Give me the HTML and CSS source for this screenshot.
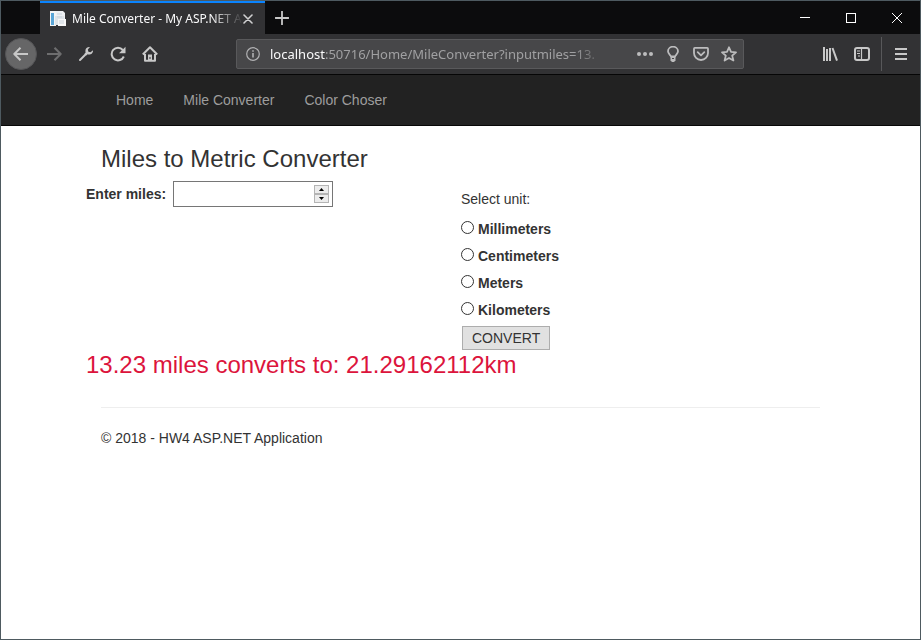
FILE: index.html
```html
<!DOCTYPE html>
<html lang="en">
<head>
<meta charset="utf-8">
<meta name="viewport" content="width=device-width, initial-scale=1">
<title>Mile Converter - My ASP.NET Application</title>
<link rel="stylesheet" href="styles.css">
</head>
<body>
<div class="window">
  <div class="titlebar">
    <div class="tab">
      <svg class="favicon" width="18" height="18" viewBox="0 0 18 18" aria-hidden="true">
        <rect x="1" y="1" width="6" height="15" fill="#f4f4f4"/>
        <rect x="2" y="3" width="3" height="12" fill="#5aa5d6"/>
        <path d="M7 1h7l2 2v8H7z" fill="#eef0f2"/>
        <path d="M6 6h9v9H6z" fill="#dfe4e8"/>
        <path d="M9 9h8v7H9z" fill="#f7f7f7"/>
        <path d="M8 4h5M8 7h5M10 11h5M10 13h5" stroke="#c9d3db" stroke-width="1"/>
      </svg>
      <span class="tab-title">Mile Converter - My ASP.NET A</span>
      <button class="tab-close" type="button" aria-label="Close tab">
        <svg width="10" height="10" viewBox="0 0 10 10"><path d="M1 1l8 8M9 1l-8 8" stroke="#d0d0d1" stroke-width="1.6" stroke-linecap="round"/></svg>
      </button>
    </div>
    <button class="new-tab" type="button" aria-label="New tab">
      <svg width="14" height="14" viewBox="0 0 14 14"><path d="M7 .5v13M.5 7h13" stroke="#c8c8c8" stroke-width="1.8" stroke-linecap="round"/></svg>
    </button>
    <div class="caption">
      <button type="button" aria-label="Minimize"><svg width="10" height="10" viewBox="0 0 10 10"><path d="M0 4.5h10" stroke="#fff"/></svg></button>
      <button type="button" aria-label="Maximize"><svg width="10" height="10" viewBox="0 0 10 10"><rect x=".5" y=".5" width="9" height="9" fill="none" stroke="#fff"/></svg></button>
      <button type="button" aria-label="Close"><svg width="10" height="10" viewBox="0 0 10 10"><path d="M0 0l10 10M10 0L0 10" stroke="#fff"/></svg></button>
    </div>
  </div>

  <div class="toolbar">
    <div class="tools">
      <button class="tool back" type="button" aria-label="Back">
        <svg width="16" height="16" viewBox="0 0 16 16"><path d="M15 8H1.500M7.500 1.700L1.300 8l6.200 6.300" class="line"/></svg>
      </button>
      <button class="tool forward" type="button" aria-label="Forward">
        <svg width="16" height="16" viewBox="0 0 16 16"><path d="M1 8h13.500M8.500 1.700L14.700 8l-6.200 6.300" class="line"/></svg>
      </button>
      <button class="tool" type="button" aria-label="Developer tools">
        <svg width="16" height="16" viewBox="0 0 16 16"><path d="M2 14l7-7" class="line" stroke-linecap="round"/><path d="M12 1C9.500.700 7.300 2.400 7.400 4.900c0 .7.100 1.100.3 1.600L6.500 7.800l1.700 1.700 1.300-1.200c2.800 1 5.800-1 5.500-4.100l-2.500 2-2.100-.5-.6-2.200z" fill="#c8c8c8"/></svg>
      </button>
      <button class="tool" type="button" aria-label="Reload">
        <svg width="16" height="16" viewBox="0 0 16 16"><path d="M13.800 10.500A6.300 6.300 0 1 1 12.800 4" class="line"/><path d="M15.500.8v6.400H9z" fill="#c8c8c8"/></svg>
      </button>
      <button class="tool" type="button" aria-label="Home">
        <svg width="16" height="16" viewBox="0 0 16 16"><path d="M.8 8.500L8 1.300l7.200 7.200" class="line"/><path d="M3 8v6.800h10V8" class="line"/><path d="M6 8.500h4V14H6z" fill="#c8c8c8"/><path d="M8 11v2" stroke="#323234"/></svg>
      </button>
    </div>
    <div class="urlbar">
      <svg class="info" width="14" height="14" viewBox="0 0 14 14" aria-hidden="true"><circle cx="7" cy="7" r="6.300" fill="none" stroke="#b1b1b3" stroke-width="1.200"/><path d="M7 6v4.500M7 3.300v1.500" stroke="#b1b1b3" stroke-width="1.600"/></svg>
      <div class="url"><span class="host">localhost</span>:50716/Home/MileConverter?inputmiles=13.</div>
      <div class="url-actions">
        <button type="button" aria-label="Page actions"><svg width="16" height="16" viewBox="0 0 16 16"><g fill="#bcbcbd"><circle cx="2" cy="8" r="2"/><circle cx="8" cy="8" r="2"/><circle cx="14" cy="8" r="2"/></g></svg></button>
        <button type="button" aria-label="Tips"><svg width="16" height="16" viewBox="0 0 16 16"><path d="M6 10.500C5.700 9 3 8 3 5.300a5 4.600 0 0 1 10 0C13 8 10.300 9 10 10.500z" class="url-line"/><path d="M5.500 10h5v4.500l-1.500 1.500H7l-1.500-1.500z" fill="#bcbcbd"/><path d="M7 12.500h2" stroke="#474749"/></svg></button>
        <button type="button" aria-label="Save to Pocket"><svg width="16" height="16" viewBox="0 0 16 16"><path d="M1.800 1.900h12.400q.8 0 .8.800V7a7 7 0 0 1-14 0V2.700q0-.8.800-.8z" class="url-line"/><path d="M4.700 6.200L8 9.300l3.300-3.100" class="url-line" stroke-linecap="round"/></svg></button>
        <button type="button" aria-label="Bookmark this page"><svg width="16" height="16" viewBox="0 0 16 16"><path d="M8 1.300l2 4.500 5 .5-3.800 3.300 1.200 4.900L8 12l-4.400 2.500 1.200-4.900L1 6.300l5-.5z" class="url-line"/></svg></button>
      </div>
    </div>
    <div class="tools end">
      <button class="tool" type="button" aria-label="Library"><svg width="16" height="16" viewBox="0 0 16 16"><path d="M2 1v14M5 3v12M8 2v13M10.500 2l4.500 12.700" stroke="#c8c8c8" stroke-width="2" fill="none"/></svg></button>
      <button class="tool" type="button" aria-label="Sidebars"><svg width="16" height="16" viewBox="0 0 16 16"><rect x="1" y="2" width="14" height="12" rx="2" class="line"/><path d="M7.500 2v12M3 5h3M3 7.500h3M4 10h2" stroke="#c8c8c8" stroke-width="1.200"/></svg></button>
      <button class="tool menu" type="button" aria-label="Menu"><svg width="12" height="12" viewBox="0 0 12 12"><path d="M0 1h12M0 6h12M0 11h12" stroke="#c8c8c8" stroke-width="2"/></svg></button>
    </div>
  </div>

  <nav class="navbar">
    <div class="container nav-links">
      <a href="#">Home</a>
      <a href="#">Mile Converter</a>
      <a href="#">Color Choser</a>
    </div>
  </nav>

  <main class="container">
    <h3 class="heading">Miles to Metric Converter</h3>
    <form class="converter">
      <div class="miles">
        <label for="miles">Enter miles:</label>
        <div class="number">
          <input id="miles" name="inputmiles" type="number" step="any">
          <div class="spinner">
            <button type="button" aria-label="Increase"><svg width="5" height="3" viewBox="0 0 5 3"><path d="M2.500 0L5 3H0z"/></svg></button>
            <button type="button" aria-label="Decrease"><svg width="5" height="3" viewBox="0 0 5 3"><path d="M0 0h5L2.500 3z"/></svg></button>
          </div>
        </div>
      </div>
      <div class="units">
        <p>Select unit:</p>
        <div class="options">
          <label><input type="radio" name="unit" value="mm">Millimeters</label>
          <label><input type="radio" name="unit" value="cm">Centimeters</label>
          <label><input type="radio" name="unit" value="m">Meters</label>
          <label><input type="radio" name="unit" value="km">Kilometers</label>
        </div>
        <button class="convert" type="submit">CONVERT</button>
      </div>
    </form>
    <h3 class="result">13.23 miles converts to: 21.29162112km</h3>
    <footer>
      <p>© 2018 - HW4 ASP.NET Application</p>
    </footer>
  </main>
</div>
</body>
</html>
```
FILE: styles.css
```css
* {
  box-sizing: border-box;
}

body {
  margin: 0;
  color: #333;
  font: 14px/20px "Liberation Sans", Arial, sans-serif;
}

button {
  padding: 0;
  border: 0;
  background: none;
  color: inherit;
  font: inherit;
}

svg {
  display: block;
}

p,
h3 {
  margin: 0;
}

.window {
  min-height: 100vh;
  border: 1px solid #4e5a60;
  background: #fff;
}

/* Browser frame */
.titlebar {
  display: flex;
  height: 33px;
  padding-left: 39px;
  background: #0c0c0d;
}

.tab {
  display: flex;
  align-items: center;
  width: 225px;
  padding: 0 12px 0 9px;
  border-top: 2px solid #0a84ff;
  background: #323234;
  color: #f9f9fa;
  font: 12px/16px "Noto Sans", sans-serif;
}

.favicon {
  flex: none;
  margin-right: 5px;
}

.tab-title {
  flex: 1;
  white-space: nowrap;
  mask-image: linear-gradient(to left, transparent, #000 32px);
}

.new-tab {
  display: grid;
  place-items: center;
  width: 34px;
}

.caption {
  display: flex;
  margin-left: auto;
}

.caption button {
  display: grid;
  place-items: center;
  width: 46px;
}

.toolbar {
  display: flex;
  align-items: center;
  justify-content: space-between;
  height: 41px;
  border-bottom: 1px solid #060606;
  background: #323234;
}

.tools {
  display: flex;
  align-items: center;
  padding-left: 4px;
}

.tool {
  display: grid;
  place-items: center;
  width: 32px;
  height: 32px;
}

.line {
  fill: none;
  stroke: #c8c8c8;
  stroke-width: 2;
  stroke-linejoin: round;
}

.back {
  margin-right: 1px;
  border: 1px solid #555557;
  border-radius: 50%;
  background: #666667;
}

.forward {
  opacity: 0.4;
}

.urlbar {
  display: flex;
  align-items: center;
  width: 508px;
  height: 30px;
  padding: 0 6px 0 9px;
  border: 1px solid #59595b;
  border-radius: 2px;
  background: #474749;
}

.info {
  flex: none;
  margin-right: 10px;
}

.url {
  flex: 1;
  max-width: 336px;
  color: #a0a0a2;
  font: 13px/20px "Noto Sans", sans-serif;
  white-space: nowrap;
  mask-image: linear-gradient(to left, transparent, #000 32px);
}

.host {
  color: #f9f9fa;
}

.url-actions {
  display: flex;
  gap: 12px;
  margin-left: auto;
}

.url-line {
  fill: none;
  stroke: #bcbcbd;
  stroke-width: 1.8;
  stroke-linejoin: round;
}

.end {
  padding-left: 0;
}

.menu {
  width: 39px;
  height: 34px;
  margin-left: 3px;
  border-left: 1px solid #58585a;
}

/* Page */
.container {
  width: 749px;
  max-width: 100%;
  margin: 0 auto;
}

.navbar {
  border-bottom: 1px solid #080808;
  background: #222;
}

.nav-links {
  display: flex;
  padding: 0 15px;
}

.nav-links a {
  padding: 15px;
  color: #9d9d9d;
  text-decoration: none;
}

h3 {
  font-size: 24px;
  font-weight: 400;
  line-height: 26px;
}

.heading {
  margin: 20px 15px 9px;
}

.converter {
  display: grid;
  grid-template-columns: 375px 1fr;
}

label {
  font-weight: 700;
}

.miles {
  display: flex;
  align-items: center;
  align-self: start;
  gap: 7px;
}

.number {
  display: flex;
  align-items: center;
  width: 160px;
  height: 26px;
  padding-right: 3px;
  border: 1px solid #767676;
}

.number input {
  flex: 1;
  min-width: 0;
  border: 0;
  outline: 0;
  background: none;
  font: inherit;
  appearance: textfield;
}

.spinner {
  display: grid;
  width: 15px;
}

.spinner button {
  display: grid;
  place-items: center;
  height: 9px;
  border: 1px solid #b4b4b4;
  background: #ececec;
}

.units {
  padding-top: 8px;
}

.options {
  display: grid;
  gap: 7px;
  margin: 10px 0 6px;
}

.options label {
  display: flex;
  align-items: center;
  gap: 4px;
}

.options input {
  width: 13px;
  height: 13px;
  margin: 0 0 3px;
  border: 1px solid #333;
  border-radius: 50%;
  background: #fff;
  appearance: none;
}

.options input:checked {
  background: radial-gradient(#333 3px, #fff 4px);
}

.convert {
  display: block;
  height: 24px;
  margin-left: 1px;
  padding: 0 9px;
  border: 1px solid #adadad;
  background: #e1e1e1;
}

.result {
  margin-top: 2px;
  color: #dc143c;
}

footer {
  margin: 29px 15px 0;
  padding-top: 20px;
  border-top: 1px solid #eee;
}
```
